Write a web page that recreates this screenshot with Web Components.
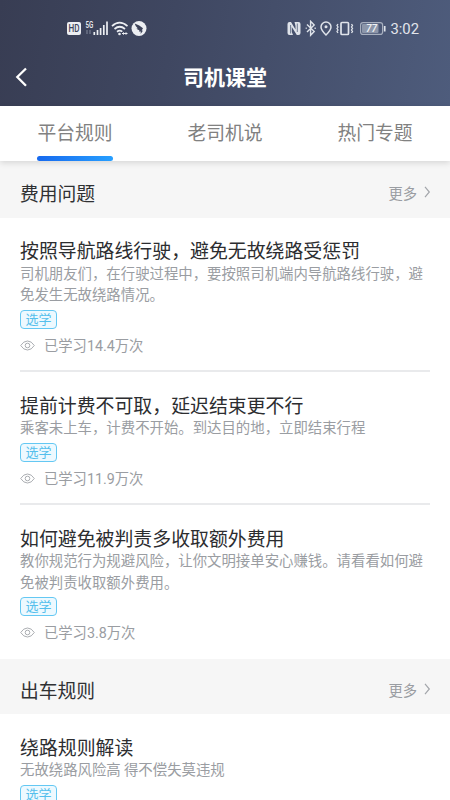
<!DOCTYPE html>
<html lang="zh-CN">
<head>
<meta charset="utf-8">
<title>司机课堂</title>
<style>
html,body{margin:0;height:800px;overflow:hidden;background:#fff}
body{font-family:"Noto Sans CJK SC",sans-serif;color:#303133}
</style>
</head>
<body>
<driver-class></driver-class>
<script>
function define(name, html) {
  const t = document.createElement('template');
  t.innerHTML = html;
  customElements.define(name, class extends HTMLElement {
    constructor() {
      super();
      this.attachShadow({mode: 'open'}).append(t.content.cloneNode(true));
    }
  });
}

define('status-bar', `<style>
:host{display:flex;height:56px;align-items:center;justify-content:space-between;padding:1px 31px 0 67px;box-sizing:border-box;font-family:Roboto,"Noto Sans",sans-serif;color:#e2e5eb}
.r{display:flex;align-items:center}
svg{display:block}
time{font-size:14.8px;line-height:18px;margin-left:4px}
</style>
<svg width="82" height="18" viewBox="67 20 82 18" fill="none" stroke="#eceef2">
 <rect x="67" y="22" width="14" height="13" rx="2" fill="#eceef2" stroke="none"/>
 <text x="68.5" y="32.200" font-size="10" font-weight="500" textLength="11" lengthAdjust="spacingAndGlyphs" fill="#3d435a" stroke="none">HD</text>
 <text x="85.5" y="27.6" font-size="9" font-weight="500" textLength="7.8" lengthAdjust="spacingAndGlyphs" fill="#eceef2" stroke="none">5G</text>
 <path d="M87 30v4M90 30v4" stroke="#777e92" stroke-width="1.2"/>
 <path d="M94.3 35v-3M97.5 35v-5M100.6 35v-7M103.8 35v-10M107 35V21.500" stroke-width="1.7"/>
 <path d="M112 26.200q7.500-7 15.500 0M114.500 29q5.200-4.500 10.500 0M117 31.700q2.700-2 5.300 0" stroke-width="1.7"/>
 <circle cx="119.500" cy="34" r="1.300" fill="#eceef2" stroke="none"/>
 <path d="M122 33.500h5.500M123.500 32.300v2.400M126 32.300v2.400" stroke-width="1"/>
 <circle cx="139" cy="28.500" r="7.500" fill="#eceef2" stroke="none"/>
 <path d="M134.700 23.500q5 1.500 8.300 4.700l-1.300 2.200 1.200.3-2.300 3.300.2-2.500-1.900.1.500-1.300q-2.200-.5-3-2l1.500.1q-2.500-1.700-3.200-4.900z" fill="#3d435a" stroke="none"/>
</svg>
<span class="r">
<svg width="100" height="18" viewBox="286 20 100 18" fill="none" stroke="#dfe3ea" stroke-width="1.400">
 <path d="M287.500 24q0-2 2-2h1.500l4.500 7.500V26l-1-4h4q2 0 2 2v9q0 2-2 2h-1.700l-5-8v5l1.200 3h-3.500q-2 0-2-2z" fill="#dfe3ea" stroke="none"/>
 <path d="M290.600 25v8.500M297.300 23.500v8.500" stroke="#525f7a" stroke-width=".8"/>
 <path d="M307 24.500l7.200 7-3.600 3.700V21.300l3.600 3.700-7.200 7M305.700 28.300h1M314.500 28.300h1.300" stroke-width="1.400"/>
 <path d="M326 35q-5-5-5-8a5 5 0 0 1 10 0q0 3-5 8z" stroke-width="1.500"/><circle cx="326" cy="26.800" r="1.500" fill="#dfe3ea" stroke="none"/>
 <rect x="341" y="22.500" width="7.500" height="12" rx="1" stroke-width="1.700"/>
 <path d="M338 24l-1 1.500 1 1.500-1 1.500 1 1.500-1 1.500 1 1.500M351.500 24l1 1.500-1 1.500 1 1.500-1 1.500 1 1.500-1 1.500" stroke-width="1.300"/>
 <rect x="360.600" y="22.600" width="22" height="11.800" rx="2.500" stroke="#a7afbf" stroke-width="1.200"/>
 <rect x="362" y="24" width="16.500" height="9" rx="1" fill="#8c96aa" stroke="none"/>
 <path d="M384.700 26v5.500" stroke-width="1.700"/>
 <text x="366" y="32.300" font-size="10.500" font-weight="500" font-style="italic" textLength="11" lengthAdjust="spacingAndGlyphs" fill="#f0f2f5" stroke="none">77</text>
</svg><time>3:02</time></span>`);

define('nav-bar', `<style>
:host{display:grid;grid-template-columns:50px 1fr 50px;height:50px;align-items:center;color:#fff}
h1{margin:0;text-align:center;font-size:21px;line-height:28px;font-weight:700;padding-bottom:11px}
svg{display:block;margin:0 0 8px 14px}
</style>
<svg width="16" height="22" viewBox="0 0 16 22" fill="none" stroke="#fff" stroke-width="2.300"><path d="M12 2.500L3.300 11l8.700 8.700"/></svg>
<h1><slot></slot></h1>`);

define('tab-item', `<style>
:host{display:flex;flex-direction:column;align-items:center;height:55px}
span{font-size:18.8px;line-height:28px;color:#818181;margin-top:12px}
i{display:block;width:76px;height:5.500px;border-radius:3px;margin-top:10px}
:host([active]) i{background:linear-gradient(90deg,#1769ee,#279fff)}
</style><span><slot></slot></span><i></i>`);

define('tab-bar', `<style>
:host{display:grid;grid-template-columns:repeat(3,1fr);height:55px;background:#fff;box-shadow:0 2px 6px rgba(0,0,0,.13);position:relative}
</style><slot></slot>`);

define('section-head', `<style>
:host{display:flex;justify-content:space-between;align-items:center;height:var(--h,57px);padding:0 19px 0 20px;background:#f6f6f6;box-sizing:border-box}
h2{margin:0;font-size:18.8px;font-weight:400;line-height:28px;padding-top:var(--drop,7px)}
.more{display:flex;align-items:center;gap:7px;color:#9a9da2;font-size:14.300px;line-height:20px;padding-top:var(--drop,7px)}
svg{display:block;margin-bottom:2px}
</style><h2><slot></slot></h2>
<span class="more"><span>更多</span><svg width="7" height="12" viewBox="0 0 7 12" fill="none" stroke="#a3a6ab" stroke-width="1.200"><path d="M1 .8L5.300 6 1 11.200"/></svg></span>`);

define('lesson-item', `<style>
:host{display:block;margin:0 20px;padding-top:21px;border-bottom:2px solid #e9eaec}
h3{margin:0 0 1px;font-size:18.9px;line-height:21.500px;font-weight:400;white-space:nowrap;color:#2c2d30}
p{margin:0;font-size:14.400px;line-height:21.500px;color:#9a9da2;white-space:nowrap}
.tag{display:block;box-sizing:border-box;width:37px;height:19px;margin-top:5.500px;border:1px solid #64c8f3;border-radius:4px;background:#edf9ff;color:#55bfec;font-size:13px;line-height:15px;text-align:center}
.seen{display:flex;align-items:center;gap:9px;height:20px;margin-top:6px;padding-bottom:15px;color:#9a9da2;font-family:Roboto,"Noto Sans CJK SC",sans-serif;font-size:14.300px;line-height:20px}
.seen span{padding-top:1px}
svg{display:block}
:host([low]){padding-top:22px}
:host([low]) h3{margin-bottom:.5px}
:host([last]){border-color:transparent;padding-top:21.500px}
:host([last]) .tag{margin-top:5px}
</style>
<h3><slot name="title"></slot></h3><p><slot></slot></p>
<span class="tag">选学</span>
<div class="seen"><svg width="15" height="11" viewBox="0 0 15 11" fill="none" stroke="#aaadb1"><path d="M.7 5.500Q3.500 1 7.500 1t6.800 4.500Q11.500 10 7.500 10T.7 5.500z"/><circle cx="7.500" cy="5.500" r="2.300"/></svg><span><slot name="count"></slot></span></div>`);

define('driver-class', `<style>
:host{display:block;height:800px;overflow:hidden;background:#fff}
header{background:linear-gradient(100deg,#383d53,#3f4761 38%,#4e5c7c);height:106px}
.second{--h:55px;--drop:7px}
</style>
<header><status-bar></status-bar><nav-bar>司机课堂</nav-bar></header>
<tab-bar><tab-item active>平台规则</tab-item><tab-item>老司机说</tab-item><tab-item>热门专题</tab-item></tab-bar>
<section-head>费用问题</section-head>
<lesson-item><span slot="title">按照导航路线行驶，避免无故绕路受惩罚</span>司机朋友们，在行驶过程中，要按照司机端内导航路线行驶，避<br>免发生无故绕路情况。<span slot="count">已学习14.4万次</span></lesson-item>
<lesson-item low><span slot="title">提前计费不可取，延迟结束更不行</span>乘客未上车，计费不开始。到达目的地，立即结束行程<span slot="count">已学习11.9万次</span></lesson-item>
<lesson-item last><span slot="title">如何避免被判责多收取额外费用</span>教你规范行为规避风险，让你文明接单安心赚钱。请看看如何避<br>免被判责收取额外费用。<span slot="count">已学习3.8万次</span></lesson-item>
<section-head class="second">出车规则</section-head>
<lesson-item low><span slot="title">绕路规则解读</span>无故绕路风险高 得不偿失莫违规</lesson-item>`);
</script>
</body>
</html>
